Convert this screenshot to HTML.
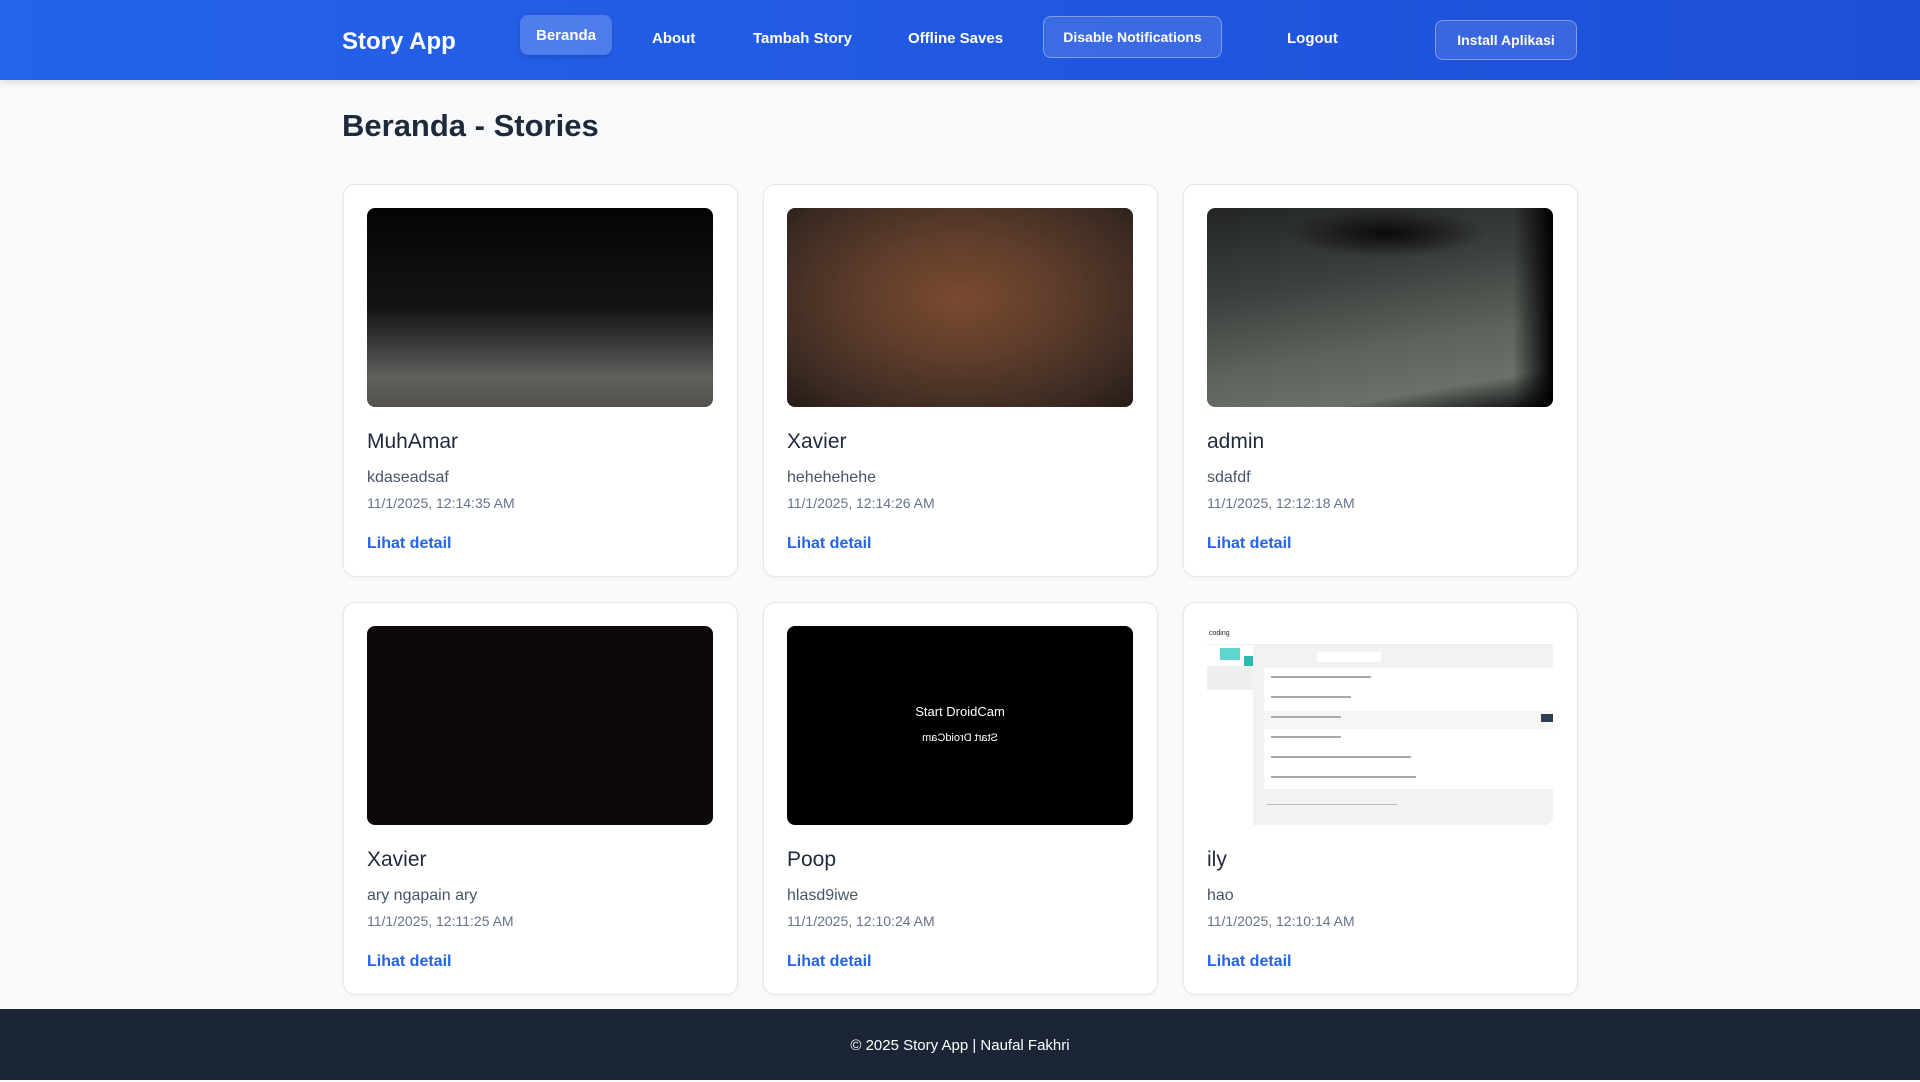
<!DOCTYPE html>
<html><head><meta charset="utf-8"><style>
*{box-sizing:border-box;margin:0;padding:0}
body{width:1920px;height:1080px;overflow:hidden;background:#f8fafc;font-family:"Liberation Sans",sans-serif;color:#1e293b;position:relative}
header{position:absolute;left:0;top:0;width:1920px;height:80px;background:linear-gradient(90deg,#2563eb,#1d4ed8);box-shadow:0 2px 8px rgba(0,0,0,.15)}
.ht{position:absolute;color:#fff;font-weight:bold;font-size:15px;top:30px}
.logo{position:absolute;left:342px;top:28px;color:#fff;font-weight:bold;font-size:24px}
.btn{position:absolute;border-radius:8px;color:#fff;font-weight:bold;font-size:15px;display:flex;align-items:center;justify-content:center}
h1{position:absolute;left:342px;top:108px;font-size:31px;font-weight:bold;color:#1e293b}
.card{position:absolute;width:395px;height:393px;background:#fff;border:1px solid #e5e7eb;border-radius:12px;box-shadow:0 1px 3px rgba(0,0,0,.04)}
.img{position:absolute;left:23px;top:23px;width:346px;height:199px;border-radius:8px;overflow:hidden}
.nm{position:absolute;left:23px;top:245px;font-size:21px;color:#1e293b}
.ds{position:absolute;left:23px;top:284px;font-size:16px;color:#475569}
.dt{position:absolute;left:23px;top:310px;font-size:14px;color:#64748b}
.lk{position:absolute;left:23px;top:350px;font-size:16px;font-weight:bold;color:#2563eb}
footer{position:absolute;left:0;top:1009px;width:1920px;height:71px;background:#1c2536;color:#fff;font-size:15px;text-align:center;line-height:73px}
</style></head><body>
<div style="position:absolute;left:0;top:0;width:143px;height:5px;background:rgba(255,255,255,.15);border-radius:0 0 4px 4px"></div>
<header>
<div class="logo">Story App</div>
<div class="btn" style="left:520px;top:15px;width:92px;height:40px;background:rgba(255,255,255,.2);box-shadow:0 2px 4px rgba(0,0,0,.15)">Beranda</div>
<div class="ht" style="left:652px">About</div>
<div class="ht" style="left:753px">Tambah Story</div>
<div class="ht" style="left:908px">Offline Saves</div>
<div class="btn" style="left:1043px;top:16px;width:179px;height:42px;background:rgba(255,255,255,.12);border:1px solid rgba(255,255,255,.35);font-size:14px">Disable Notifications</div>
<div class="ht" style="left:1287px">Logout</div>
<div class="btn" style="left:1435px;top:20px;width:142px;height:40px;background:rgba(255,255,255,.12);border:1px solid rgba(255,255,255,.35);font-size:14px">Install Aplikasi</div>
</header>
<h1>Beranda - Stories</h1>

<div class="card" style="left:343px;top:184px"><div class="img" style="background:linear-gradient(180deg,#050404 0%,#151212 50%,#3a3a38 68%,#5e605c 85%,#55524e 100%)"></div><div class="nm">MuhAmar</div><div class="ds">kdaseadsaf</div><div class="dt">11/1/2025, 12:14:35 AM</div><div class="lk">Lihat detail</div></div>
<div class="card" style="left:763px;top:184px"><div class="img" style="background:radial-gradient(ellipse at 50% 45%,#7a4a30 0%,#5e3d2b 40%,#3a2a22 80%,#241a16 100%)"></div><div class="nm">Xavier</div><div class="ds">hehehehehe</div><div class="dt">11/1/2025, 12:14:26 AM</div><div class="lk">Lihat detail</div></div>
<div class="card" style="left:1183px;top:184px"><div class="img" style="background:linear-gradient(170deg,#222524 0%,#3c403d 35%,#5c625c 65%,#6a716a 85%,#0a0a0a 100%)"><div style="position:absolute;right:0;top:0;width:40px;height:199px;background:linear-gradient(90deg,rgba(0,0,0,0),#000)"></div><div style="position:absolute;left:80px;top:0;width:200px;height:50px;background:radial-gradient(ellipse,#0a0a0a,rgba(0,0,0,0) 70%)"></div></div><div class="nm">admin</div><div class="ds">sdafdf</div><div class="dt">11/1/2025, 12:12:18 AM</div><div class="lk">Lihat detail</div></div>

<div class="card" style="left:343px;top:602px"><div class="img" style="background:#0d0909"></div><div class="nm">Xavier</div><div class="ds">ary ngapain ary</div><div class="dt">11/1/2025, 12:11:25 AM</div><div class="lk">Lihat detail</div></div>
<div class="card" style="left:763px;top:602px"><div class="img" style="background:#000;color:#fff;text-align:center"><div style="position:absolute;top:78px;width:100%;font-size:13px">Start DroidCam</div><div style="position:absolute;top:106px;width:100%;font-size:11px;transform:scaleX(-1)">Start DroidCam</div></div><div class="nm">Poop</div><div class="ds">hlasd9iwe</div><div class="dt">11/1/2025, 12:10:24 AM</div><div class="lk">Lihat detail</div></div>
<div class="card" style="left:1183px;top:602px"><div class="img" style="background:#fff">
<div style="position:absolute;left:2px;top:4px;font-size:7px;color:#222">coding</div>
<div style="position:absolute;left:0;top:18px;width:346px;height:1px;background:#eee"></div>
<div style="position:absolute;left:13px;top:22px;width:20px;height:12px;background:#5dd6cf"></div>
<div style="position:absolute;left:37px;top:30px;width:14px;height:20px;background:#2bb8b0"></div>
<div style="position:absolute;left:0;top:40px;width:46px;height:24px;background:#eee"></div>
<div style="position:absolute;left:46px;top:19px;width:300px;height:180px;background:#f2f2f2;border-radius:0 0 6px 0"></div>
<div style="position:absolute;left:57px;top:42px;width:289px;height:121px;background:#fff"></div>
<div style="position:absolute;left:110px;top:26px;width:64px;height:10px;background:#fff"></div>
<div style="position:absolute;left:64px;top:50px;width:100px;height:2px;background:#aaa"></div>
<div style="position:absolute;left:64px;top:70px;width:80px;height:2px;background:#aaa"></div>
<div style="position:absolute;left:57px;top:84px;width:289px;height:20px;background:#f6f6f6"></div>
<div style="position:absolute;left:64px;top:90px;width:70px;height:2px;background:#aaa"></div>
<div style="position:absolute;left:334px;top:88px;width:12px;height:8px;background:#2c3e50"></div>
<div style="position:absolute;left:64px;top:110px;width:70px;height:2px;background:#aaa"></div>
<div style="position:absolute;left:64px;top:130px;width:140px;height:2px;background:#aaa"></div>
<div style="position:absolute;left:64px;top:150px;width:145px;height:2px;background:#aaa"></div>
<div style="position:absolute;left:60px;top:178px;width:130px;height:1px;background:#bbb"></div>
</div><div class="nm">ily</div><div class="ds">hao</div><div class="dt">11/1/2025, 12:10:14 AM</div><div class="lk">Lihat detail</div></div>

<footer>© 2025 Story App | Naufal Fakhri</footer>
</body></html>
